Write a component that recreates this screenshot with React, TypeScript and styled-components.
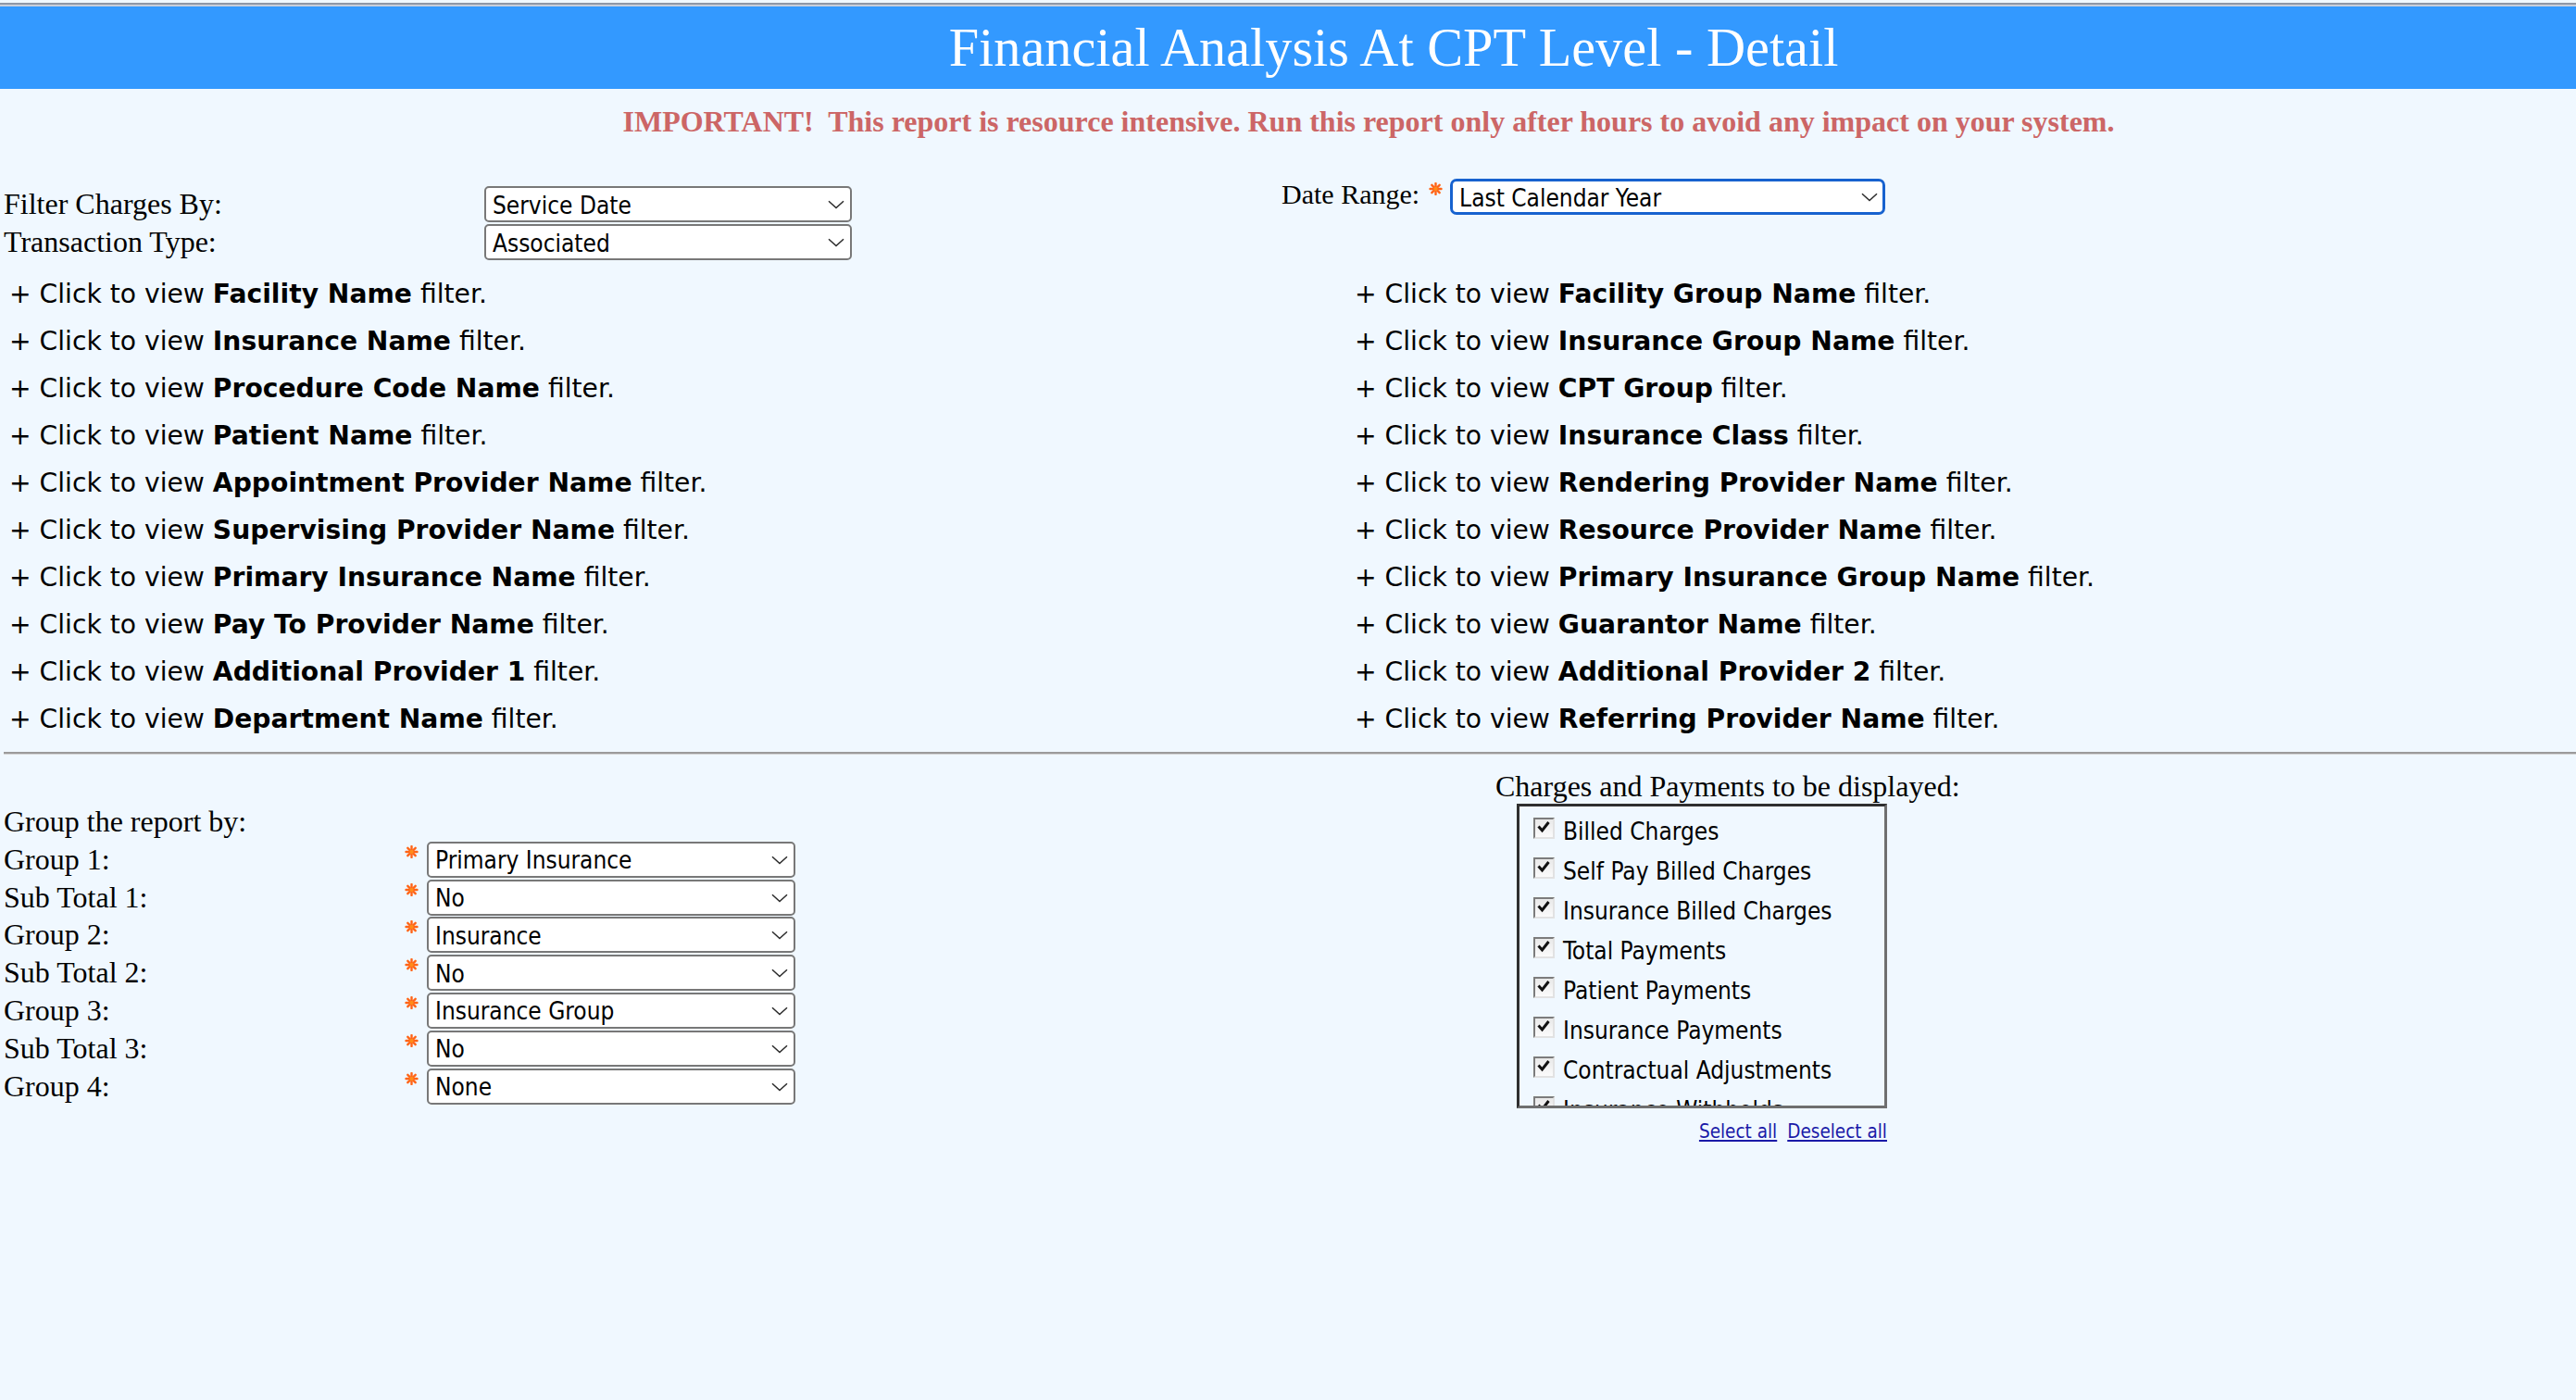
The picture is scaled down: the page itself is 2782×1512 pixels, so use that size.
import styled, { createGlobalStyle } from 'styled-components'

const SERIF = `"Liberation Serif", "Times New Roman", serif`
const VERDANA = `"DejaVu Sans", Verdana, sans-serif`
const TAHOMA = `"DejaVu Sans Condensed", "Liberation Sans", Tahoma, sans-serif`

const GlobalStyle = createGlobalStyle`
  html, body {
    margin: 0;
    padding: 0;
    background: #f0f8ff;
  }
  body {
    font-family: ${SERIF};
    color: #000;
  }
`

const Page = styled.div`
  box-sizing: border-box;
  min-height: 100vh;
  padding-top: 3px;
  background: #f0f8ff;
`

const TopRule = styled.div`
  height: 2px;
  background: #8e97a6;
  border-bottom: 2px solid #c7cedb;
`

const Header = styled.h1`
  margin: 0;
  height: 89px;
  padding-left: 228px;
  background: #3399ff;
  color: #fff;
  font: 400 58.3px/89px ${SERIF};
  text-align: center;
  white-space: nowrap;
`

const Warning = styled.div`
  padding: 15px 0 0 174px;
  color: #cc6666;
  font: 700 32px/40px ${SERIF};
  text-align: center;
  white-space: nowrap;
`

const TopForm = styled.div`
  margin-top: 42px;
  padding-left: 4px;
  display: grid;
  grid-template-columns: 1380px auto;
  align-items: start;
`

const FieldStack = styled.div<{ $top?: number }>`
  padding-top: ${p => p.$top || 0}px;
  display: flex;
  flex-direction: column;
  gap: 2px;
`

const FormRow = styled.div`
  display: flex;
  align-items: center;
  height: 39px;
`

const Label = styled.span<{ $w: number }>`
  width: ${p => p.$w}px;
  flex: none;
  font: 400 32px/39px ${SERIF};
  white-space: nowrap;
`

const DateRow = styled.div`
  display: flex;
  align-items: flex-start;
`

const DateLabel = styled.span`
  font: 400 30px/33px ${SERIF};
  white-space: nowrap;
`

const Required = styled.svg<{ $ml: number; $mr: number }>`
  flex: none;
  align-self: flex-start;
  margin: 4px ${p => p.$mr}px 0 ${p => p.$ml}px;
`

const SelectWrap = styled.div<{ $w: number }>`
  position: relative;
  flex: none;
  width: ${p => p.$w}px;
  height: 39px;
`

const NativeSelect = styled.select<{ $focused?: boolean }>`
  appearance: none;
  -webkit-appearance: none;
  box-sizing: border-box;
  width: 100%;
  height: 100%;
  margin: 0;
  padding: 2px 34px 0 7px;
  border: ${p => (p.$focused ? '3px solid #1762cf' : '2px solid #787878')};
  border-radius: ${p => (p.$focused ? 7 : 5)}px;
  background: #fff;
  color: #000;
  font: 400 26px ${TAHOMA};
  outline: none;
`

const Chevron = styled.svg`
  position: absolute;
  right: 8px;
  top: 15px;
  pointer-events: none;
`

const Filters = styled.div`
  margin-top: 11px;
  padding-left: 10px;
  display: grid;
  grid-template-columns: 1453px auto;
  grid-auto-rows: 51px;
  font: 400 28.2px/51px ${VERDANA};
`

const FilterLink = styled.div`
  white-space: nowrap;
  cursor: pointer;
  b {
    font-weight: 700;
  }
`

const Rule = styled.hr`
  margin: 10px 0 0 4px;
  height: 0;
  border: none;
  border-top: 2px solid #9b9b9b;
  border-bottom: 1px solid #d4d4d4;
`

const BottomSection = styled.div`
  margin-top: 16px;
  padding-left: 4px;
  display: grid;
  grid-template-columns: 1611px auto;
  align-items: start;
`

const GroupStack = styled.div`
  padding-top: 38px;
  display: flex;
  flex-direction: column;
`

const GroupHeading = styled.div`
  font: 400 32px/36.8px ${SERIF};
  margin-bottom: 3px;
`

const GroupRows = styled.div`
  display: flex;
  flex-direction: column;
  gap: 1.8px;
`

const ChargesPanel = styled.div`
  display: flex;
  flex-direction: column;
  align-items: flex-start;
`

const PanelTitle = styled.div`
  font: 400 32px/36.8px ${SERIF};
  white-space: nowrap;
`

const ChargesBox = styled.div`
  margin-left: 23px;
  box-sizing: border-box;
  width: 400px;
  height: 329px;
  padding: 12px 0 0 15px;
  border: 3px solid;
  border-color: #2f2f2f #6f6f6f #6f6f6f #2f2f2f;
  overflow-y: auto;
  scrollbar-width: none;
  &::-webkit-scrollbar {
    display: none;
  }
`

const CheckRow = styled.label`
  display: flex;
  align-items: flex-start;
  height: 43px;
  font: 400 26px/30px ${TAHOMA};
  white-space: nowrap;
  cursor: pointer;
`

const CheckBox = styled.span`
  flex: none;
  box-sizing: border-box;
  width: 23px;
  height: 23px;
  margin-right: 9px;
  border: 2px solid;
  border-color: #7c7c7c #e2e2e2 #e2e2e2 #7c7c7c;
  background: linear-gradient(#e9e9e9, #fbfbfb);
  display: flex;
  align-items: flex-start;
  justify-content: flex-start;
`

const LinksRow = styled.div`
  margin: 13px 0 0 23px;
  width: 400px;
  display: flex;
  justify-content: flex-end;
  gap: 11px;
  font: 400 20.5px/24px ${TAHOMA};
`

const TextLink = styled.a`
  color: #1a1aa8;
  text-decoration: underline;
  cursor: pointer;
`

const Star = ({ ml, mr }: { ml: number; mr: number }) => (
  <Required $ml={ml} $mr={mr} width="15" height="14" viewBox="0 0 15 14">
    <g stroke="#ff6417" strokeWidth="2.4" strokeLinecap="round">
      <line x1="7.5" y1="1" x2="7.5" y2="13" />
      <line x1="1.5" y1="7" x2="13.5" y2="7" />
      <line x1="3.3" y1="2.8" x2="11.7" y2="11.2" />
      <line x1="11.7" y1="2.8" x2="3.3" y2="11.2" />
    </g>
    <circle cx="7.5" cy="7" r="2.2" fill="#ff8c1a" />
  </Required>
)

const Select = ({ value, width, focused }: { value: string; width: number; focused?: boolean }) => (
  <SelectWrap $w={width}>
    <NativeSelect $focused={focused} defaultValue={value}>
      <option>{value}</option>
    </NativeSelect>
    <Chevron width="18" height="10" viewBox="0 0 18 10">
      <path d="M1 1.2 L9 8.6 L17 1.2" fill="none" stroke="#2b2b2b" strokeWidth="1.5" />
    </Chevron>
  </SelectWrap>
)

const filterPairs: [string, string][] = [
  ['Facility Name', 'Facility Group Name'],
  ['Insurance Name', 'Insurance Group Name'],
  ['Procedure Code Name', 'CPT Group'],
  ['Patient Name', 'Insurance Class'],
  ['Appointment Provider Name', 'Rendering Provider Name'],
  ['Supervising Provider Name', 'Resource Provider Name'],
  ['Primary Insurance Name', 'Primary Insurance Group Name'],
  ['Pay To Provider Name', 'Guarantor Name'],
  ['Additional Provider 1', 'Additional Provider 2'],
  ['Department Name', 'Referring Provider Name'],
]

const groupRows = [
  ['Group 1:', 'Primary Insurance'],
  ['Sub Total 1:', 'No'],
  ['Group 2:', 'Insurance'],
  ['Sub Total 2:', 'No'],
  ['Group 3:', 'Insurance Group'],
  ['Sub Total 3:', 'No'],
  ['Group 4:', 'None'],
]

const chargeItems = [
  'Billed Charges',
  'Self Pay Billed Charges',
  'Insurance Billed Charges',
  'Total Payments',
  'Patient Payments',
  'Insurance Payments',
  'Contractual Adjustments',
  'Insurance Withholds',
  'Other Adjustments',
  'Refunds',
]

export default function App() {
  return (
    <>
      <GlobalStyle />
      <Page>
        <TopRule />
        <Header>Financial Analysis At CPT Level - Detail</Header>
        <Warning>
          {'IMPORTANT!\u00a0 This report is resource intensive. Run this report only after hours to avoid any impact on your system.'}
        </Warning>

        <TopForm>
          <FieldStack $top={8}>
            <FormRow>
              <Label $w={519}>Filter Charges By:</Label>
              <Select value="Service Date" width={397} />
            </FormRow>
            <FormRow>
              <Label $w={519}>Transaction Type:</Label>
              <Select value="Associated" width={397} />
            </FormRow>
          </FieldStack>
          <DateRow>
            <DateLabel>Date Range:</DateLabel>
            <Star ml={10} mr={8} />
            <Select value="Last Calendar Year" width={470} focused />
          </DateRow>
        </TopForm>

        <Filters>
          {filterPairs.flat().map(name => (
            <FilterLink key={name}>
              + Click to view <b>{name}</b> filter.
            </FilterLink>
          ))}
        </Filters>

        <Rule />

        <BottomSection>
          <GroupStack>
            <GroupHeading>Group the report by:</GroupHeading>
            <GroupRows>
              {groupRows.map(([label, value]) => (
                <FormRow key={label}>
                  <Label $w={433}>{label}</Label>
                  <Star ml={0} mr={9} />
                  <Select value={value} width={398} />
                </FormRow>
              ))}
            </GroupRows>
          </GroupStack>

          <ChargesPanel>
            <PanelTitle>Charges and Payments to be displayed:</PanelTitle>
            <ChargesBox>
              {chargeItems.map(item => (
                <CheckRow key={item}>
                  <CheckBox role="checkbox" aria-checked="true">
                    <svg width="19" height="17" viewBox="0 0 19 17">
                      <path d="M3.5 7.5 L7.5 12 L14.5 3" fill="none" stroke="#111" strokeWidth="3" />
                    </svg>
                  </CheckBox>
                  {item}
                </CheckRow>
              ))}
            </ChargesBox>
            <LinksRow>
              <TextLink>Select all</TextLink>
              <TextLink>Deselect all</TextLink>
            </LinksRow>
          </ChargesPanel>
        </BottomSection>
      </Page>
    </>
  )
}
